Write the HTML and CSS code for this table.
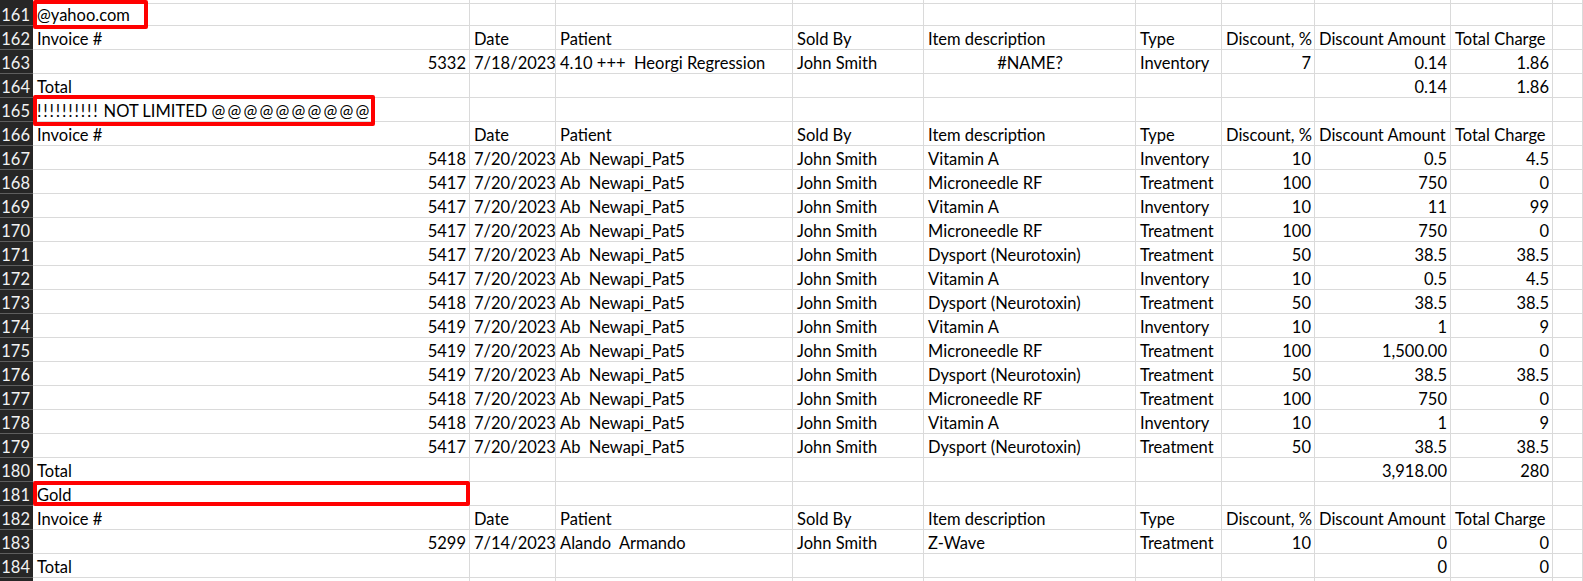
FILE: index.html
```html
<!DOCTYPE html>
<html>
<head>
<meta charset="utf-8">
<link rel="stylesheet" href="styles.css">
</head>
<body>
<div class="sheet">
  <div class="row stub"><div class="rh"></div><div class="c"></div><div class="c"></div><div class="c"></div><div class="c"></div><div class="c"></div><div class="c"></div><div class="c"></div><div class="c"></div><div class="c"></div><div class="c"></div></div>

  <div class="row"><div class="rh">161</div><div class="c">@yahoo.com</div><div class="c"></div><div class="c"></div><div class="c"></div><div class="c"></div><div class="c"></div><div class="c"></div><div class="c"></div><div class="c"></div><div class="c"></div></div>
  <div class="row"><div class="rh">162</div><div class="c">Invoice #</div><div class="c">Date</div><div class="c">Patient</div><div class="c">Sold By</div><div class="c">Item description</div><div class="c">Type</div><div class="c">Discount, %</div><div class="c">Discount Amount</div><div class="c">Total Charge</div><div class="c"></div></div>
  <div class="row"><div class="rh">163</div><div class="c n">5332</div><div class="c">7/18/2023</div><div class="c">4.10 +++  Heorgi Regression</div><div class="c">John Smith</div><div class="c ctr">#NAME?</div><div class="c">Inventory</div><div class="c n">7</div><div class="c n">0.14</div><div class="c n">1.86</div><div class="c"></div></div>
  <div class="row"><div class="rh">164</div><div class="c">Total</div><div class="c"></div><div class="c"></div><div class="c"></div><div class="c"></div><div class="c"></div><div class="c"></div><div class="c n">0.14</div><div class="c n">1.86</div><div class="c"></div></div>
  <div class="row"><div class="rh">165</div><div class="c"><span class="bang">!!!!!!!!!!</span> NOT LIMITED <span class="at">@@@@@@@@@@</span></div><div class="c"></div><div class="c"></div><div class="c"></div><div class="c"></div><div class="c"></div><div class="c"></div><div class="c"></div><div class="c"></div><div class="c"></div></div>
  <div class="row"><div class="rh">166</div><div class="c">Invoice #</div><div class="c">Date</div><div class="c">Patient</div><div class="c">Sold By</div><div class="c">Item description</div><div class="c">Type</div><div class="c">Discount, %</div><div class="c">Discount Amount</div><div class="c">Total Charge</div><div class="c"></div></div>
  <div class="row"><div class="rh">167</div><div class="c n">5418</div><div class="c">7/20/2023</div><div class="c">Ab  Newapi_Pat5</div><div class="c">John Smith</div><div class="c">Vitamin A</div><div class="c">Inventory</div><div class="c n">10</div><div class="c n">0.5</div><div class="c n">4.5</div><div class="c"></div></div>
  <div class="row"><div class="rh">168</div><div class="c n">5417</div><div class="c">7/20/2023</div><div class="c">Ab  Newapi_Pat5</div><div class="c">John Smith</div><div class="c">Microneedle RF</div><div class="c">Treatment</div><div class="c n">100</div><div class="c n">750</div><div class="c n">0</div><div class="c"></div></div>
  <div class="row"><div class="rh">169</div><div class="c n">5417</div><div class="c">7/20/2023</div><div class="c">Ab  Newapi_Pat5</div><div class="c">John Smith</div><div class="c">Vitamin A</div><div class="c">Inventory</div><div class="c n">10</div><div class="c n">11</div><div class="c n">99</div><div class="c"></div></div>
  <div class="row"><div class="rh">170</div><div class="c n">5417</div><div class="c">7/20/2023</div><div class="c">Ab  Newapi_Pat5</div><div class="c">John Smith</div><div class="c">Microneedle RF</div><div class="c">Treatment</div><div class="c n">100</div><div class="c n">750</div><div class="c n">0</div><div class="c"></div></div>
  <div class="row"><div class="rh">171</div><div class="c n">5417</div><div class="c">7/20/2023</div><div class="c">Ab  Newapi_Pat5</div><div class="c">John Smith</div><div class="c">Dysport (Neurotoxin)</div><div class="c">Treatment</div><div class="c n">50</div><div class="c n">38.5</div><div class="c n">38.5</div><div class="c"></div></div>
  <div class="row"><div class="rh">172</div><div class="c n">5417</div><div class="c">7/20/2023</div><div class="c">Ab  Newapi_Pat5</div><div class="c">John Smith</div><div class="c">Vitamin A</div><div class="c">Inventory</div><div class="c n">10</div><div class="c n">0.5</div><div class="c n">4.5</div><div class="c"></div></div>
  <div class="row"><div class="rh">173</div><div class="c n">5418</div><div class="c">7/20/2023</div><div class="c">Ab  Newapi_Pat5</div><div class="c">John Smith</div><div class="c">Dysport (Neurotoxin)</div><div class="c">Treatment</div><div class="c n">50</div><div class="c n">38.5</div><div class="c n">38.5</div><div class="c"></div></div>
  <div class="row"><div class="rh">174</div><div class="c n">5419</div><div class="c">7/20/2023</div><div class="c">Ab  Newapi_Pat5</div><div class="c">John Smith</div><div class="c">Vitamin A</div><div class="c">Inventory</div><div class="c n">10</div><div class="c n">1</div><div class="c n">9</div><div class="c"></div></div>
  <div class="row"><div class="rh">175</div><div class="c n">5419</div><div class="c">7/20/2023</div><div class="c">Ab  Newapi_Pat5</div><div class="c">John Smith</div><div class="c">Microneedle RF</div><div class="c">Treatment</div><div class="c n">100</div><div class="c n">1,500.00</div><div class="c n">0</div><div class="c"></div></div>
  <div class="row"><div class="rh">176</div><div class="c n">5419</div><div class="c">7/20/2023</div><div class="c">Ab  Newapi_Pat5</div><div class="c">John Smith</div><div class="c">Dysport (Neurotoxin)</div><div class="c">Treatment</div><div class="c n">50</div><div class="c n">38.5</div><div class="c n">38.5</div><div class="c"></div></div>
  <div class="row"><div class="rh">177</div><div class="c n">5418</div><div class="c">7/20/2023</div><div class="c">Ab  Newapi_Pat5</div><div class="c">John Smith</div><div class="c">Microneedle RF</div><div class="c">Treatment</div><div class="c n">100</div><div class="c n">750</div><div class="c n">0</div><div class="c"></div></div>
  <div class="row"><div class="rh">178</div><div class="c n">5418</div><div class="c">7/20/2023</div><div class="c">Ab  Newapi_Pat5</div><div class="c">John Smith</div><div class="c">Vitamin A</div><div class="c">Inventory</div><div class="c n">10</div><div class="c n">1</div><div class="c n">9</div><div class="c"></div></div>
  <div class="row"><div class="rh">179</div><div class="c n">5417</div><div class="c">7/20/2023</div><div class="c">Ab  Newapi_Pat5</div><div class="c">John Smith</div><div class="c">Dysport (Neurotoxin)</div><div class="c">Treatment</div><div class="c n">50</div><div class="c n">38.5</div><div class="c n">38.5</div><div class="c"></div></div>
  <div class="row"><div class="rh">180</div><div class="c">Total</div><div class="c"></div><div class="c"></div><div class="c"></div><div class="c"></div><div class="c"></div><div class="c"></div><div class="c n">3,918.00</div><div class="c n">280</div><div class="c"></div></div>
  <div class="row"><div class="rh">181</div><div class="c">Gold</div><div class="c"></div><div class="c"></div><div class="c"></div><div class="c"></div><div class="c"></div><div class="c"></div><div class="c"></div><div class="c"></div><div class="c"></div></div>
  <div class="row"><div class="rh">182</div><div class="c">Invoice #</div><div class="c">Date</div><div class="c">Patient</div><div class="c">Sold By</div><div class="c">Item description</div><div class="c">Type</div><div class="c">Discount, %</div><div class="c">Discount Amount</div><div class="c">Total Charge</div><div class="c"></div></div>
  <div class="row"><div class="rh">183</div><div class="c n">5299</div><div class="c">7/14/2023</div><div class="c">Alando  Armando</div><div class="c">John Smith</div><div class="c">Z-Wave</div><div class="c">Treatment</div><div class="c n">10</div><div class="c n">0</div><div class="c n">0</div><div class="c"></div></div>
  <div class="row"><div class="rh">184</div><div class="c">Total</div><div class="c"></div><div class="c"></div><div class="c"></div><div class="c"></div><div class="c"></div><div class="c"></div><div class="c n">0</div><div class="c n">0</div><div class="c"></div></div>
  <div class="row"><div class="rh"></div><div class="c"></div><div class="c"></div><div class="c"></div><div class="c"></div><div class="c"></div><div class="c"></div><div class="c"></div><div class="c"></div><div class="c"></div><div class="c"></div></div>

  <div class="mark mark1"></div>
  <div class="mark mark2"></div>
  <div class="mark mark3"></div>
</div>
</body>
</html>
```

FILE: styles.css
```css
html, body {
  margin: 0;
  padding: 0;
  background: #ffffff;
  overflow: hidden;
}

.sheet {
  position: relative;
  font-family: Lato, "Liberation Sans", sans-serif;
  font-size: 16.5px;
  color: #000;
}

.row {
  display: grid;
  grid-template-columns: 33px 437px 86px 237px 131px 212px 86px 93px 136px 102px 1fr;
  height: 24px;
}

.row.stub {
  height: 2px;
}

.rh {
  background: #262626;
  color: #f2f2f2;
  text-align: right;
  padding: 3px 3px 0 0;
  line-height: 20px;
  border-bottom: 1px solid #5e5e5e;
  overflow: hidden;
}

.c {
  border-right: 1px solid #dadada;
  border-bottom: 1px solid #dadada;
  padding: 3px 3px 0 4px;
  line-height: 20px;
  white-space: pre;
  overflow: visible;
  min-width: 0;
}

.c.n {
  text-align: right;
}

.c.ctr {
  text-align: center;
}

.bang {
  letter-spacing: 1.8px;
}

.at {
  letter-spacing: 2.2px;
}

.mark {
  position: absolute;
  left: 33px;
  border: 4px solid #ff0000;
  border-radius: 2px;
  box-sizing: border-box;
}

.mark1 { top: 0; width: 115px; height: 29px; }
.mark2 { top: 95px; width: 342px; height: 31px; }
.mark3 { top: 481px; width: 437px; height: 25px; }
```
